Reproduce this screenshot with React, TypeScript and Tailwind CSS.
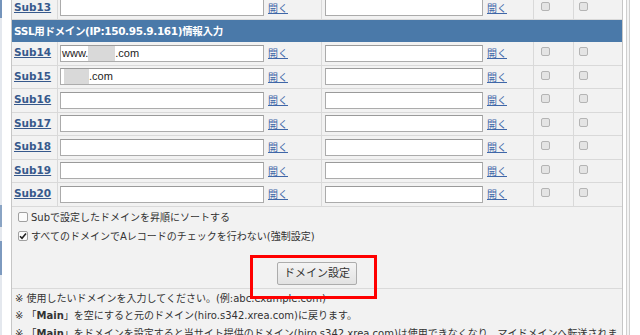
import React from "react";

const rowLine = "border-[#d9d9d9]";

function TCheck() {
  return <div className="w-[9px] h-[9px] rounded-[2px] border border-[#b4b4b4] bg-[#e4e4e4]" />;
}

function FakeInput({ w, children }: { w: string; children?: React.ReactNode }) {
  return (
    <div
      className={`${w} h-[17px] shrink-0 border border-[#ababab] border-t-[#9a9a9a] bg-white flex items-center pl-[1px] text-[11px] leading-[13px] text-[#222] font-['Liberation_Sans',sans-serif] overflow-hidden`}
    >
      {children}
    </div>
  );
}

function Link() {
  return <span className="text-[10px] leading-[12px] text-[#3f67a8] underline ml-[4px] mt-[2px]">開く</span>;
}

function Row({ label, content }: { label: string; content?: React.ReactNode }) {
  return (
    <div className={`flex shrink-0 h-[23.5px] border-b ${rowLine} bg-[#f2f2f2]`}>
      <div className={`w-[46px] shrink-0 border-r ${rowLine} pl-[2px] pt-[4px] flex items-start`}>
        <span className="text-[10.5px] leading-[13px] font-bold underline text-[#37598c]">{label}</span>
      </div>
      <div className={`w-[264px] shrink-0 border-r ${rowLine} flex items-center pl-[2px]`}>
        <FakeInput w="w-[204px]">{content}</FakeInput>
        <Link />
      </div>
      <div className={`w-[212px] shrink-0 border-r ${rowLine} flex items-center pl-[3px]`}>
        <FakeInput w="w-[158px]" />
        <Link />
      </div>
      <div className={`w-[40px] shrink-0 border-r ${rowLine} flex items-center pl-[7px] pb-[3px]`}>
        <TCheck />
      </div>
      <div className="w-[48px] shrink-0 flex items-center pl-[5px] pb-[3px]">
        <TCheck />
      </div>
    </div>
  );
}

export default function App() {
  return (
    <div className="relative w-[640px] h-[335px] overflow-hidden bg-white flex items-start font-['DejaVu_Sans','Noto_Sans_CJK_JP',sans-serif] text-[#333]">
      {/* left strip */}
      <div className="w-[11px] h-[335px] shrink-0 flex">
        <div className="w-[2px] flex flex-col">
          <div className="h-[18px] bg-[#7494bb]" />
          <div className="h-[187px] bg-[#e4e8ee]" />
          <div className="h-[22px] bg-[#8aa4c4]" />
          <div className="h-[14px] bg-[#e4e8ee]" />
          <div className="h-[34px] bg-[#7d9abf]" />
          <div className="flex-1 bg-[#e4e8ee]" />
        </div>
      </div>

      {/* main */}
      <div className="w-[612px] shrink-0 border-l border-r border-[#c6c6c6] flex flex-col -mt-[3.5px]">
        <Row label="Sub13" />
        <div className="h-[22px] shrink-0 bg-[#4a79a9] flex items-center pl-[2px]">
          <span className="text-[10.5px] font-bold text-white leading-[13px] tracking-[-0.35px]">SSL用ドメイン(IP:150.95.9.161)情報入力</span>
        </div>
        <Row
          label="Sub14"
          content={
            <>
              <span>www.</span>
              <span className="inline-block w-[27px] h-[15px] bg-[#d9d9d9]" />
              <span>.com</span>
            </>
          }
        />
        <Row
          label="Sub15"
          content={
            <>
              <span className="inline-block w-[25px] h-[15px] bg-[#d9d9d9] ml-[2px]" />
              <span>.com</span>
            </>
          }
        />
        <Row label="Sub16" />
        <Row label="Sub17" />
        <Row label="Sub18" />
        <Row label="Sub19" />
        <Row label="Sub20" />

        <div className="bg-[#f2f2f2] flex flex-col shrink-0">
          <div className="pt-[1px] pl-[6px] flex flex-col text-[10px] leading-[13px]">
            <div className="h-[19px] flex items-center gap-[3px]">
              <div className="w-[10px] h-[10px] rounded-[2px] border border-[#a0a0a0] bg-[#fbfbfb]" />
              <span>Subで設定したドメインを昇順にソートする</span>
            </div>
            <div className="h-[19px] flex items-center gap-[3px]">
              <div className="w-[10px] h-[10px] rounded-[2px] border border-[#a0a0a0] bg-[#fbfbfb] flex items-center justify-center">
                <svg width="8" height="8" viewBox="0 0 8 8">
                  <path d="M1 4.2 L3 6.2 L7 1.5" stroke="#222" strokeWidth="1.6" fill="none" />
                </svg>
              </div>
              <span>すべてのドメインでAレコードのチェックを行わない(強制設定)</span>
            </div>
          </div>
          <div className="flex justify-center pt-[16px] pb-[3px] border-b border-[#dadada]">
            <button className="w-[80px] h-[23px] rounded-[2px] border border-[#acacac] bg-gradient-to-b from-[#f4f4f4] to-[#e2e2e2] text-[11px] leading-[13px] text-[#333]">
              ドメイン設定
            </button>
          </div>
          <div className="pl-[3px] pt-[1px] text-[10px] leading-[17.5px] pr-[4px]">
            <div>※ 使用したいドメインを入力してください。(例:abc.example.com)</div>
            <div>
              ※ 「<b>Main</b>」を空にすると元のドメイン(hiro.s342.xrea.com)に戻ります。
            </div>
            <div>
              ※ 「<b>Main</b>」をドメインを設定すると当サイト提供のドメイン(hiro.s342.xrea.com)は使用できなくなり、マイドメインへ転送されます。
            </div>
          </div>
        </div>
      </div>

      {/* right double line */}
      <div className="w-[4px] h-[335px] shrink-0 ml-[3px] border-l border-r border-[#cfcfcf] bg-[#f4f4f4]" />

      {/* highlight overlay */}
      <div className="absolute left-[250px] top-[255px] w-[127px] h-[44px] border-[3px] border-[#ff0000]" />
    </div>
  );
}
